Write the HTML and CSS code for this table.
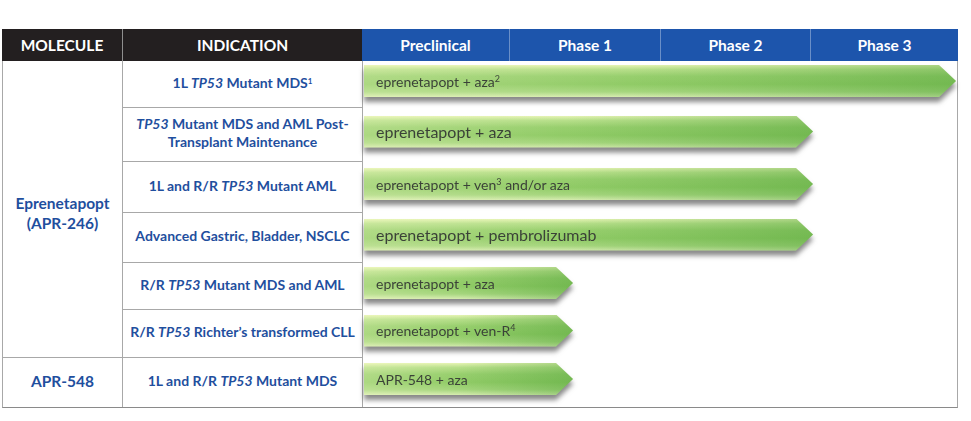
FILE: index.html
```html
<!DOCTYPE html>
<html>
<head>
<meta charset="utf-8">
<link rel="stylesheet" href="styles.css">
</head>
<body>
<div class="chart">
  <div class="head">
    <div class="hcell dark">MOLECULE</div>
    <div class="hcell dark sep">INDICATION</div>
    <div class="hcell blue">Preclinical</div>
    <div class="hcell blue bsep">Phase 1</div>
    <div class="hcell blue bsep">Phase 2</div>
    <div class="hcell blue bsep">Phase 3</div>
  </div>
  <div class="body">
    <div class="mol mol-main"><span>Eprenetapopt<br>(APR-246)</span></div>
    <div class="mol mol-last"><span>APR-548</span></div>

    <div class="ind r1"><span>1L <i>TP53</i> Mutant MDS<sup class="ft">1</sup></span></div>
    <div class="phase r1"><div class="arrow-wrap"><div class="arrow w-full"><span>eprenetapopt + aza<sup>2</sup></span></div></div></div>

    <div class="ind r2"><span><i>TP53</i> Mutant MDS and AML Post-<br>Transplant Maintenance</span></div>
    <div class="phase r2"><div class="arrow-wrap"><div class="arrow w-mid big"><span>eprenetapopt + aza</span></div></div></div>

    <div class="ind r3"><span>1L and R/R <i>TP53</i> Mutant AML</span></div>
    <div class="phase r3"><div class="arrow-wrap"><div class="arrow w-mid"><span>eprenetapopt + ven<sup>3</sup> and/or aza</span></div></div></div>

    <div class="ind r4"><span>Advanced Gastric, Bladder, NSCLC</span></div>
    <div class="phase r4"><div class="arrow-wrap"><div class="arrow w-mid big"><span>eprenetapopt + pembrolizumab</span></div></div></div>

    <div class="ind r5"><span>R/R <i>TP53</i> Mutant MDS and AML</span></div>
    <div class="phase r5"><div class="arrow-wrap"><div class="arrow w-short"><span>eprenetapopt + aza</span></div></div></div>

    <div class="ind r6"><span>R/R <i>TP53</i> Richter’s transformed CLL</span></div>
    <div class="phase r6"><div class="arrow-wrap"><div class="arrow w-short"><span>eprenetapopt + ven-R<sup>4</sup></span></div></div></div>

    <div class="ind r7 last"><span>1L and R/R <i>TP53</i> Mutant MDS</span></div>
    <div class="phase r7 last"><div class="arrow-wrap"><div class="arrow w-short"><span>APR-548 + aza</span></div></div></div>
  </div>
</div>
</body>
</html>
```

FILE: styles.css
```css
* { box-sizing: border-box; }
body {
  margin: 0;
  background: #ffffff;
  font-family: Lato, "Open Sans", sans-serif;
}
.chart {
  width: 956px;
  margin: 29px 0 0 2px;
}
.head {
  display: grid;
  grid-template-columns: 120px 240px 147px 151px 150px 148px;
  height: 32px;
}
.hcell {
  display: flex;
  align-items: center;
  justify-content: center;
  color: #ffffff;
  font-weight: 700;
  font-size: 15.5px;
}
.dark { background: #231f20; }
.sep { border-left: 1px solid #8f8f8f; }
.blue { background: #1d55ac; }
.bsep { border-left: 1px solid #6a8fc8; }

.body {
  display: grid;
  grid-template-columns: 120px 240px 596px;
  grid-template-rows: 47px 54px 51px 50px 47px 48px 49px;
  border-left: 1px solid #a8a8a8;
  border-bottom: 1px solid #8a8a8a;
  border-right: 1px solid #a8a8a8;
}
.mol {
  grid-column: 1;
  display: flex;
  align-items: center;
  justify-content: center;
  text-align: center;
  color: #1f4f9e;
  font-weight: 700;
  font-size: 15.5px;
  line-height: 20px;
  border-right: 1px solid #a8a8a8;
}
.mol-main { grid-row: 1 / 7; border-bottom: 1px solid #a8a8a8; padding-top: 8px; }
.mol-last { grid-row: 7; padding-bottom: 4px; }

.ind {
  grid-column: 2;
  display: flex;
  align-items: center;
  justify-content: center;
  text-align: center;
  color: #1f4f9e;
  font-weight: 700;
  font-size: 14px;
  line-height: 18px;
  border-right: 1px solid #a8a8a8;
  border-bottom: 1px solid #a8a8a8;
  padding-bottom: 3px;
}
.ind.last { border-bottom: none; }
.ind i { font-style: italic; }
.ft { font-size: 8px; vertical-align: top; line-height: 14px; font-weight: 700; }

.r1 { grid-row: 1; }
.r2 { grid-row: 2; }
.r3 { grid-row: 3; }
.r4 { grid-row: 4; }
.r5 { grid-row: 5; }
.r6 { grid-row: 6; }
.r7 { grid-row: 7; }

.phase {
  grid-column: 3;
  display: flex;
  align-items: center;
  padding: 0 0 7px 1px;
}
.arrow-wrap {
  filter: drop-shadow(0 5px 2.5px rgba(40, 40, 40, 0.55));
}
.arrow {
  height: 32px;
  display: flex;
  align-items: center;
  padding-left: 12px;
  color: #3b4238;
  font-size: 14px;
  white-space: nowrap;
  clip-path: polygon(0 0, calc(100% - 17px) 0, 100% 50%, calc(100% - 17px) 100%, 0 100%);
  background:
    linear-gradient(to right, rgba(255, 255, 210, 0.25) 0%, rgba(255, 255, 255, 0) 45%, rgba(60, 150, 40, 0.35) 100%),
    linear-gradient(to bottom, #e6f4b4 0%, #b7df8a 14%, #98cf6e 35%, #90cb66 60%, #a6d67e 84%, #d6ecb0 100%);
}
.arrow sup { font-size: 9px; vertical-align: top; line-height: 12px; }
.big { font-size: 16px; }
.w-full { width: 592px; }
.w-mid { width: 449px; }
.w-short { width: 209px; }
```
